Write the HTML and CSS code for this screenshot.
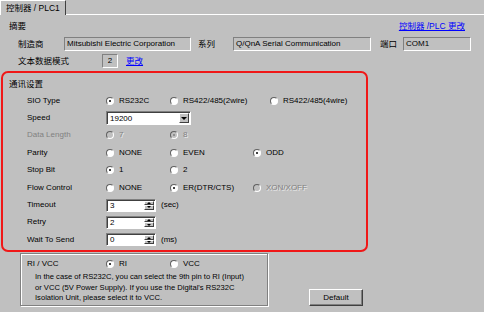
FILE: index.html
```html
<!DOCTYPE html>
<html lang="zh">
<head>
    <meta charset="UTF-8">
    <meta name="viewport" content="width=device-width, initial-scale=1.0">
    <title>控制器 / PLC1</title>
    <link rel="stylesheet" href="styles.css">
</head>
<body>
    <div class="tabbar">
        <div class="tab">控制器 / PLC1</div>
        <div class="tab-rest"></div>
    </div>

    <div class="summary">
        <div class="summary-head">
            <span>摘要</span>
            <a class="link" href="#">控制器 /PLC 更改</a>
        </div>
        <div class="info-row">
            <span class="lbl-maker">制造商</span>
            <span class="field f-maker">Mitsubishi Electric Corporation</span>
            <span class="lbl-series">系列</span>
            <span class="field f-series">Q/QnA Serial Communication</span>
            <span class="lbl-port">端口</span>
            <span class="field f-port">COM1</span>
        </div>
        <div class="info-row mode-row">
            <span class="lbl-mode">文本数据模式</span>
            <span class="field f-mode">2</span>
            <a class="link" href="#">更改</a>
        </div>
    </div>

    <div class="settings">
        <div class="settings-title">通讯设置</div>
        <div class="grid">
            <span>SIO Type</span>
            <label class="opt"><i class="radio on"></i>RS232C</label>
            <label class="opt"><i class="radio"></i>RS422/485(2wire)</label>
            <label class="opt opt-far"><i class="radio"></i>RS422/485(4wire)</label>

            <span>Speed</span>
            <div class="select span3">
                <span class="select-val">19200</span>
                <span class="select-btn"><i class="arrow-down"></i></span>
            </div>

            <span class="dim">Data Length</span>
            <label class="opt off"><i class="radio"></i>7</label>
            <label class="opt off"><i class="radio on"></i>8</label>
            <span></span>

            <span>Parity</span>
            <label class="opt"><i class="radio"></i>NONE</label>
            <label class="opt"><i class="radio"></i>EVEN</label>
            <label class="opt"><i class="radio on"></i>ODD</label>

            <span>Stop Bit</span>
            <label class="opt"><i class="radio on"></i>1</label>
            <label class="opt"><i class="radio"></i>2</label>
            <span></span>

            <span>Flow Control</span>
            <label class="opt"><i class="radio"></i>NONE</label>
            <label class="opt"><i class="radio on"></i>ER(DTR/CTS)</label>
            <label class="opt off"><i class="radio"></i>XON/XOFF</label>

            <span>Timeout</span>
            <div class="spin-wrap span3">
                <div class="spin"><span class="spin-val">3</span><span class="spin-btns"><i class="sb"><i class="arrow-up"></i></i><i class="sb"><i class="arrow-down"></i></i></span></div>
                <span>(sec)</span>
            </div>

            <span>Retry</span>
            <div class="spin-wrap span3">
                <div class="spin"><span class="spin-val">2</span><span class="spin-btns"><i class="sb"><i class="arrow-up"></i></i><i class="sb"><i class="arrow-down"></i></i></span></div>
            </div>

            <span>Wait To Send</span>
            <div class="spin-wrap span3">
                <div class="spin"><span class="spin-val">0</span><span class="spin-btns"><i class="sb"><i class="arrow-up"></i></i><i class="sb"><i class="arrow-down"></i></i></span></div>
                <span>(ms)</span>
            </div>
        </div>
    </div>

    <div class="bottom">
        <div class="groupbox">
            <div class="grid gb-row">
                <span>RI / VCC</span>
                <label class="opt"><i class="radio on"></i>RI</label>
                <label class="opt"><i class="radio"></i>VCC</label>
            </div>
            <p class="note">In the case of RS232C, you can select the 9th pin to RI (Input)<br>or VCC (5V Power Supply). If you use the Digital's RS232C<br>Isolation Unit, please select it to VCC.</p>
        </div>
        <button class="btn">Default</button>
    </div>
</body>
</html>
```

FILE: styles.css
```css
*{
    margin: 0;
    padding: 0;
    box-sizing: border-box;
}

body{
    width: 484px;
    height: 312px;
    overflow: hidden;
    background-color: #c0c0c0;
    font-family: "Liberation Sans", "Noto Sans CJK SC", sans-serif;
    font-size: 8px;
    line-height: 10px;
    color: #000;
}

i{
    display: block;
    font-style: normal;
}

/* tab strip */
.tabbar{
    display: flex;
    height: 15px;
}

.tab{
    padding: 1px 5px 0 5px;
    font-size: 8.5px;
    line-height: 13px;
    border-top: 1px solid #fff;
    border-left: 1px solid #fff;
    border-right: 1px solid #404040;
}

.tab-rest{
    flex: 1;
    border-bottom: 1px solid #fff;
}

/* summary */
.summary{
    font-size: 8.5px;
}

.summary-head{
    display: flex;
    justify-content: space-between;
    height: 12px;
    line-height: 12px;
    margin-top: 5px;
    padding: 0 19px 0 9px;
}

.link{
    color: #0000ff;
    text-decoration: underline;
}

.info-row{
    display: flex;
    align-items: center;
    height: 14px;
    margin-top: 5px;
    padding-left: 18px;
}

.mode-row{
    margin-top: 3px;
}

.field{
    height: 14px;
    line-height: 12px;
    padding-left: 2px;
    font-size: 8px;
    border: 1px solid;
    border-color: #808080 #fff #fff #808080;
    white-space: nowrap;
    overflow: hidden;
}

.lbl-maker{ width: 46px; }
.f-maker{ width: 127px; }
.lbl-series{ width: 35px; margin-left: 7px; }
.f-series{ width: 138px; }
.lbl-port{ width: 23px; margin-left: 9px; }
.f-port{ width: 68px; }
.lbl-mode{ width: 84px; }
.f-mode{
    width: 16px;
    padding: 0;
    text-align: center;
    margin-right: 8px;
}

/* communication settings */
.settings{
    width: 367px;
    height: 181px;
    margin: 3px 0 0 1px;
    padding: 6px 0 0 24px;
    border: 2px solid #f01818;
    border-radius: 7px;
}

.settings-title{
    margin-left: -18px;
    font-size: 8.5px;
    height: 10px;
    margin-bottom: 3px;
}

.grid{
    display: grid;
    grid-template-columns: 79px 64px 83px auto;
    grid-auto-rows: 17.4px;
    align-items: center;
}

.span3{
    grid-column: span 3;
}

.opt{
    display: flex;
    align-items: center;
    gap: 5px;
    white-space: nowrap;
}

.opt-far{
    margin-left: 17px;
}

.radio{
    position: relative;
    width: 8px;
    height: 8px;
    border-radius: 50%;
    border: 1px solid;
    border-color: #606060 #fff #fff #606060;
    background-color: #fff;
}

.radio.on::after{
    content: "";
    position: absolute;
    left: 2px;
    top: 2px;
    width: 2px;
    height: 2px;
    border-radius: 50%;
    background-color: #000;
}

.dim{
    color: #808080;
}

.off{
    color: #808080;
    text-shadow: 1px 1px 0 rgba(255, 255, 255, 0.7);
}

.off .radio{
    background-color: #c0c0c0;
}

.off .radio.on::after{
    background-color: #808080;
}

/* inputs */
.select{
    display: flex;
    width: 85px;
    height: 14px;
    background-color: #fff;
    border: 1px solid;
    border-color: #808080 #fff #fff #808080;
    box-shadow: inset 1px 1px 0 #404040;
}

.select-val{
    flex: 1;
    padding: 1px 0 0 3px;
    line-height: 11px;
}

.select-btn{
    display: flex;
    align-items: center;
    justify-content: center;
    width: 10px;
    margin: 1px 1px 1px 0;
    background-color: #c0c0c0;
    border: 1px solid;
    border-color: #fff #404040 #404040 #fff;
}

.arrow-down{
    width: 0;
    height: 0;
    border-left: 3px solid transparent;
    border-right: 3px solid transparent;
    border-top: 3px solid #000;
}

.arrow-up{
    width: 0;
    height: 0;
    border-left: 2px solid transparent;
    border-right: 2px solid transparent;
    border-bottom: 2px solid #000;
}

.spin-wrap .arrow-down{
    border-left-width: 2px;
    border-right-width: 2px;
    border-top-width: 2px;
}

.spin-wrap{
    display: flex;
    align-items: center;
    gap: 5px;
}

.spin{
    display: flex;
    width: 50px;
    height: 13px;
    background-color: #fff;
    border: 1px solid;
    border-color: #808080 #fff #fff #808080;
    box-shadow: inset 1px 1px 0 #404040;
}

.spin-val{
    flex: 1;
    padding: 1px 0 0 3px;
    line-height: 10px;
}

.spin-btns{
    display: flex;
    flex-direction: column;
    width: 10px;
    margin: 1px 1px 1px 0;
}

.sb{
    flex: 1;
    display: flex;
    align-items: center;
    justify-content: center;
    background-color: #c0c0c0;
    border: 1px solid;
    border-color: #fff #404040 #404040 #fff;
}

/* RI / VCC group and button */
.bottom{
    display: flex;
    align-items: flex-end;
    margin-top: 1px;
}

.groupbox{
    width: 248px;
    height: 53px;
    margin-left: 20px;
    padding: 1px 0 0 6px;
    border: 1px solid #808080;
    box-shadow: inset 1px 1px 0 #fff, 1px 1px 0 #fff;
}

.gb-row{
    grid-template-columns: 79px 64px auto;
}

.note{
    padding-left: 8px;
    font-size: 7.6px;
    line-height: 10.5px;
    margin-top: 0;
    white-space: nowrap;
}

.btn{
    width: 54px;
    height: 17px;
    margin-left: 41px;
    font-family: "Liberation Sans", sans-serif;
    font-size: 8px;
    background-color: #c0c0c0;
    border: 1px solid;
    border-color: #fff #404040 #404040 #fff;
    box-shadow: inset -1px -1px 0 #808080;
}
```
